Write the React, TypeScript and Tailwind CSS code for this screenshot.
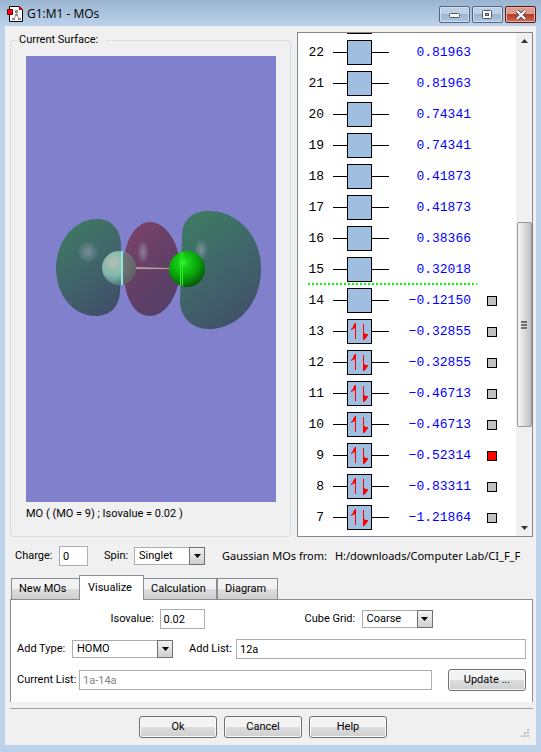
import { ReactNode } from "react";

const orbitals = [
  { id: 22, energy: "0.81963", filled: false },
  { id: 21, energy: "0.81963", filled: false },
  { id: 20, energy: "0.74341", filled: false },
  { id: 19, energy: "0.74341", filled: false },
  { id: 18, energy: "0.41873", filled: false },
  { id: 17, energy: "0.41873", filled: false },
  { id: 16, energy: "0.38366", filled: false },
  { id: 15, energy: "0.32018", filled: false },
  { id: 14, energy: "−0.12150", filled: false },
  { id: 13, energy: "−0.32855", filled: true },
  { id: 12, energy: "−0.32855", filled: true },
  { id: 11, energy: "−0.46713", filled: true },
  { id: 10, energy: "−0.46713", filled: true },
  { id: 9, energy: "−0.52314", filled: true },
  { id: 8, energy: "−0.83311", filled: true },
  { id: 7, energy: "−1.21864", filled: true },
];

const AppIcon = () => (
  <svg width="16" height="16" viewBox="0 0 16 16">
    <path d="M2.500 .5h10l3 3v12h-13z" fill="#fff" stroke="#000" />
    <path d="M12 0v4h4z" fill="#e00000" />
    <path d="M9.500 5v4l-3 4M9.500 9l3 4" stroke="#999" fill="none" />
    <path d="M8 4h3v3H8zM5 12h3v2H5zM11 12h3v2h-3zM8 8h3v2H8z" fill="#8c8c8c" />
    <path d="M.5 3.500h5v5h-5z" fill="#f00" stroke="#700" />
  </svg>
);

const Molecule = () => (
  <svg
    className="block h-full w-full"
    viewBox="0 0 250 446"
    preserveAspectRatio="xMidYMid meet"
  >
    <defs>
      <linearGradient id="lobe" x1="0.2" y1="0" x2="0.7" y2="1">
        <stop offset="0" stopColor="#3e7a62" />
        <stop offset="0.45" stopColor="#40686a" />
        <stop offset="1" stopColor="#405068" />
      </linearGradient>
      <linearGradient id="core" x1="0.2" y1="0" x2="0.8" y2="1">
        <stop offset="0" stopColor="#7c4268" />
        <stop offset="0.5" stopColor="#643f67" />
        <stop offset="1" stopColor="#524068" />
      </linearGradient>
      <radialGradient id="shine">
        <stop offset="0" stopColor="#a0a8c0" stopOpacity="0.6" />
        <stop offset="1" stopColor="#a0a8c0" stopOpacity="0" />
      </radialGradient>
      <radialGradient id="fluorine" cx="0.35" cy="0.35" r="0.75">
        <stop offset="0" stopColor="#b4c0b4" />
        <stop offset="0.5" stopColor="#82b8ac" />
        <stop offset="1" stopColor="#3c6670" />
      </radialGradient>
      <radialGradient id="chlorine" cx="0.4" cy="0.32" r="0.7">
        <stop offset="0" stopColor="#50e850" />
        <stop offset="0.2" stopColor="#14d214" />
        <stop offset="0.6" stopColor="#0aa00a" />
        <stop offset="1" stopColor="#045804" />
      </radialGradient>
    </defs>
    <path
      d="M71 163C85 163 95 173 95 190L94 236C93 251 84 260 70 260C46 260 30 238 30 212C30 186 48 163 71 163Z"
      fill="url(#lobe)"
    />
    <path
      d="M124 166C140 166 154 188 154 212C154 238 140 260 124 260C107 260 98 240 97 212C98 184 110 166 124 166Z"
      fill="url(#core)"
    />
    <path
      d="M183 155C212 155 235 180 235 213C235 247 212 273 182 273C166 273 155 261 154 247L156 178C157 163 167 155 183 155Z"
      fill="url(#lobe)"
    />
    <ellipse cx="62" cy="196" rx="11" ry="11" fill="url(#shine)" />
    <ellipse cx="117" cy="196" rx="6" ry="12" fill="url(#shine)" />
    <ellipse cx="175" cy="194" rx="7" ry="11" fill="url(#shine)" />
    <path d="M109 211l35 1v2h-35z" fill="#b49aa4" />
    <path d="M109 213h35v1h-35z" fill="#6c4858" />
    <circle cx="93" cy="212" r="17" fill="url(#fluorine)" />
    <path d="M97 196a17 17 0 0 1 0 33z" fill="#6a5a62" fillOpacity="0.75" />
    <path d="M95 195h2v34h-2z" fill="#8ee8dc" />
    <circle cx="161" cy="213" r="18" fill="url(#chlorine)" />
    <path d="M154 197h1v33h-1zM156 196h1v34h-1z" fill="#28ee28" />
  </svg>
);

const Electrons = () => (
  <svg className="size-full" viewBox="0 0 23 23" fill="#f00">
    <path d="M7 3h1v16H7zM7 3v5L3 10V9l2-2V6z" />
    <path d="M15 4h1v16h-1zM16 20v-7h1v1h3v1l-2 3z" />
  </svg>
);

interface DropdownProps {
  id: string;
  options: string[];
  width: string;
}

const Dropdown = ({ id, options, width }: DropdownProps) => (
  <div className={`relative h-[18px] shrink-0 ${width}`}>
    <select
      id={id}
      className="block h-full w-full appearance-none border border-[#abadb3] bg-white pl-1 leading-4 outline-none"
    >
      {options.map((option) => (
        <option key={option}>{option}</option>
      ))}
    </select>
    <span className="pointer-events-none absolute inset-y-0 right-0 flex w-4 items-center justify-center border border-[#707070] bg-linear-to-b from-[#f3f3f3] to-[#cfcfcf]">
      <svg width="7" height="4" viewBox="0 0 7 4">
        <path d="M0 0h7L3.500 4z" />
      </svg>
    </span>
  </div>
);

const PushButton = ({ children }: { children: ReactNode }) => (
  <button
    type="button"
    className="h-[22px] w-[78px] shrink-0 rounded-[3px] border border-[#707070] bg-linear-to-b from-[#f3f3f3] from-50% via-[#dddddd] via-50% to-[#cfcfcf] text-center leading-4 shadow-[inset_0_0_0_1px_#fafafa]"
  >
    {children}
  </button>
);

const TitleBar = () => (
  <header className="flex h-[26px] items-start justify-between pl-[2px]">
    <div className="flex items-center gap-1 pt-[6px]">
      <AppIcon />
      <h1 className="font-['Open_Sans',sans-serif] text-[12px] leading-4">
        G1:M1 - MOs
      </h1>
    </div>
    <div className="flex gap-[2px] pt-[6px]">
      <button
        type="button"
        aria-label="Minimize"
        className="flex h-[17px] w-[31px] items-center justify-center rounded-[2px] border border-[#52677f] bg-linear-to-b from-[#bdd0e5] from-50% via-[#9cb4cf] via-50% to-[#b0c8e2] shadow-[inset_0_0_0_1px_#cfdff0]"
      >
        <svg width="12" height="7" viewBox="0 0 12 7">
          <rect x="0.500" y="2.500" width="10" height="4" rx="1" fill="#fff" stroke="#535666" />
        </svg>
      </button>
      <button
        type="button"
        aria-label="Maximize"
        className="flex h-[17px] w-[31px] items-center justify-center rounded-[2px] border border-[#52677f] bg-linear-to-b from-[#bdd0e5] from-50% via-[#9cb4cf] via-50% to-[#b0c8e2] shadow-[inset_0_0_0_1px_#cfdff0]"
      >
        <svg width="11" height="9" viewBox="0 0 11 9">
          <rect x="0.500" y="0.500" width="9" height="8" rx="1" fill="#fff" stroke="#535666" />
          <rect x="3.500" y="3.500" width="3" height="2" fill="#9cb4cf" stroke="#535666" />
        </svg>
      </button>
      <button
        type="button"
        aria-label="Close"
        className="flex h-[17px] w-[31px] items-center justify-center rounded-[2px] border border-[#5a1a18] bg-linear-to-b from-[#dc9c8e] from-50% via-[#b8382a] via-50% to-[#cf6a50] shadow-[inset_0_0_0_1px_#e8b4a8]"
      >
        <svg width="12" height="10" viewBox="0 0 12 10">
          <path d="M2 1l8 8M10 1L2 9" stroke="#535666" strokeWidth="4" />
          <path d="M2 1l8 8M10 1L2 9" stroke="#fff" strokeWidth="2" />
        </svg>
      </button>
    </div>
  </header>
);

const OrbitalList = () => (
  <div className="flex h-[505px] w-[236px] shrink-0 border border-[#828790] bg-white">
    <ul className="min-w-0 flex-1 overflow-hidden font-['Liberation_Mono',monospace] text-[13px] leading-4">
      {/* lower edge of the next box up, scrolled out of view */}
      <li className="flex h-1 pl-[49px]" aria-hidden="true">
        <span className="h-px w-[25px] bg-black" />
      </li>
      {orbitals.map(({ id, energy, filled }) => (
        <li key={id} className="relative flex h-[31px] items-center">
          <span className="w-[26px] text-right">{id}</span>
          <span className="ml-[9px] h-px w-[14px] bg-black" />
          <span className="size-[25px] border border-black bg-[#a0bee0]">
            {filled && <Electrons />}
          </span>
          <span className="h-px w-[17px] bg-black" />
          <span className="w-[82px] text-right text-[#0000ff]">{energy}</span>
          {id < 15 && (
            <button
              type="button"
              aria-label={`Surface for orbital ${id}`}
              className={`ml-4 size-[10px] border border-black ${
                id === 9 ? "bg-[#ff0000]" : "bg-[#c0c0c0]"
              }`}
            />
          )}
          {id === 15 && (
            <span className="absolute bottom-0 left-[10px] h-[2px] w-[169px] bg-[repeating-linear-gradient(90deg,#00ff00_0_2px,transparent_2px_4px)]" />
          )}
        </li>
      ))}
    </ul>
    <div className="flex w-4 shrink-0 flex-col items-center bg-[#f0f0f0]">
      <svg className="my-[6px] shrink-0" width="7" height="4" viewBox="0 0 7 4">
        <path d="M0 4h7L3.500 0z" fill="#333" />
      </svg>
      <div className="flex-[174]" />
      <div className="flex w-[15px] flex-[204] flex-col items-center justify-center gap-px rounded-[2px] border border-[#979797] bg-linear-to-r from-[#f6f6f6] via-[#dcdcde] to-[#c0c0c4]">
        <span className="h-[2px] w-[6px] bg-[#707070]" />
        <span className="h-[2px] w-[6px] bg-[#707070]" />
        <span className="h-[2px] w-[6px] bg-[#707070]" />
      </div>
      <div className="flex-[93]" />
      <svg className="my-[6px] shrink-0" width="7" height="4" viewBox="0 0 7 4">
        <path d="M0 0h7L3.500 4z" fill="#333" />
      </svg>
    </div>
  </div>
);

const tab =
  "h-[21px] border border-b-0 border-[#898c95] bg-linear-to-b from-[#f2f2f2] from-50% via-[#dddddd] via-50% to-[#cfcfcf] px-[7px] text-left leading-4";
const field =
  "h-5 min-w-0 border border-[#abadb3] bg-white px-[3px] leading-4 outline-none";

const App = () => {
  return (
    <div className="min-h-screen bg-[#bbd2ea] bg-linear-to-b from-[#9ab4d0] to-[#bbd2ea] to-[26px] px-[5px] pb-[6px] font-['Roboto',sans-serif] text-[11px] leading-4 text-black">
      <TitleBar />
      <main className="bg-[#f0f0f0] pt-[6px] pr-[3px] pl-[5px]">
        <div className="flex gap-[6px]">
          <fieldset className="min-w-0 flex-1 rounded-[3px] border border-[#d5dfe5] pt-2 pr-[14px] pl-[15px]">
            <legend className="-ml-2 pr-2 pl-px">Current Surface:</legend>
            <div className="h-[446px] bg-[#8080cc]">
              <Molecule />
            </div>
            <p className="pt-1">MO ( (MO = 9) ; Isovalue = 0.02 )</p>
          </fieldset>
          <OrbitalList />
        </div>

        <div className="flex h-[38px] items-center pr-[6px] pl-[5px]">
          <label htmlFor="charge" className="w-11 shrink-0">
            Charge:
          </label>
          <input id="charge" className={`${field} w-[29px]`} defaultValue="0" />
          <label htmlFor="spin" className="ml-4 w-[30px] shrink-0">
            Spin:
          </label>
          <Dropdown id="spin" width="w-[71px]" options={["Singlet", "Triplet"]} />
          <p className="ml-[17px] flex min-w-0 flex-1 gap-2 overflow-hidden font-['Noto_Sans',sans-serif] whitespace-nowrap">
            <span>Gaussian MOs from:</span>
            <span>H:/downloads/Computer Lab/CI_F_F</span>
          </p>
        </div>

        <div role="tablist" className="flex h-6 items-end">
          <button type="button" role="tab" className={`${tab} ml-px w-[69px]`}>
            New MOs
          </button>
          <button
            type="button"
            role="tab"
            aria-selected="true"
            className="relative -mb-px -ml-px h-[25px] w-[65px] border border-b-0 border-[#898c95] bg-white px-2 text-left leading-4"
          >
            Visualize
          </button>
          <button type="button" role="tab" className={`${tab} -ml-px w-[74px]`}>
            Calculation
          </button>
          <button type="button" role="tab" className={`${tab} w-[61px]`}>
            Diagram
          </button>
        </div>
        <section className="flex flex-col gap-[10px] border border-b-0 border-[#898c95] bg-white px-[6px] pt-[9px] pb-[11px]">
          <div className="flex items-center justify-center">
            <label htmlFor="isovalue" className="w-[49px] shrink-0">
              Isovalue:
            </label>
            <input id="isovalue" className={`${field} w-[45px]`} defaultValue="0.02" />
            <label htmlFor="grid" className="ml-[100px] w-[57px] shrink-0">
              Cube Grid:
            </label>
            <Dropdown id="grid" width="w-[71px]" options={["Coarse", "Medium", "Fine"]} />
          </div>
          <div className="flex items-center">
            <label htmlFor="type" className="w-[55px] shrink-0">
              Add Type:
            </label>
            <Dropdown id="type" width="w-[101px]" options={["HOMO", "LUMO"]} />
            <label htmlFor="add" className="ml-4 w-[47px] shrink-0">
              Add List:
            </label>
            <input id="add" className={`${field} flex-1`} defaultValue="12a" />
          </div>
          <div className="flex items-center">
            <label htmlFor="current" className="w-[62px] shrink-0">
              Current List:
            </label>
            <input
              id="current"
              className={`${field} mr-4 flex-1 text-[#838383]`}
              defaultValue="1a-14a"
              readOnly
            />
            <PushButton>Update ...</PushButton>
          </div>
        </section>

        <footer className="relative mt-[6px] flex h-[37px] items-center justify-center gap-[7px] border-t border-[#a0a0a0] pr-[17px]">
          <PushButton>Ok</PushButton>
          <PushButton>Cancel</PushButton>
          <PushButton>Help</PushButton>
          <svg className="absolute right-1 bottom-2" width="8" height="8" viewBox="0 0 8 8">
            <path d="M6 0h2v2H6zM3 3h2v2H3zM6 3h2v2H6zM0 6h2v2H0zM3 6h2v2H3zM6 6h2v2H6z" fill="#c0c0c0" />
          </svg>
        </footer>
      </main>
    </div>
  );
};

export default App;
